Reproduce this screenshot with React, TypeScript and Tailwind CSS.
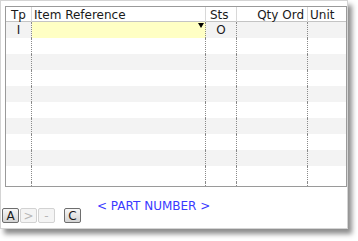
import React from 'react';

type Row = { tp?: string; sts?: string };

const ROWS: Row[] = [
  { tp: 'I', sts: 'O' },
  {}, {}, {}, {}, {}, {}, {}, {}, {},
];

const cell = 'h-[16px] border-r border-dotted border-[#8a8a8a]';

function ToolButton({ label, disabled }: { label: string; disabled?: boolean }) {
  return (
    <div
      className={
        'w-[17px] h-[15px] flex items-center justify-center text-[12px] leading-none rounded-[2px] border ' +
        (disabled
          ? 'border-[#d2d2d2] bg-[#f4f4f4] text-[#b8b8b8]'
          : 'border-[#6e6e6e] bg-gradient-to-b from-[#f7f7f7] to-[#d4d4d4] text-[#1a1a1a]')
      }
    >
      {label}
    </div>
  );
}

export default function App() {
  return (
    <div
      className="w-[358px] h-[241px] bg-white"
      style={{ fontFamily: '"DejaVu Sans", Verdana, sans-serif' }}
    >
      <div className="w-[348px] h-[229px] bg-white border border-[#d4d4d4] shadow-[4px_5px_5px_rgba(0,0,0,0.45)] flex flex-col pt-[5px] pl-[4px]">
        {/* grid */}
        <div className="w-[342px] h-[181px] border border-[#9a9a9a] flex flex-col overflow-hidden">
          <div className="grid grid-cols-[26px_174px_31px_71px_1fr] h-[15px] border-b border-[#c4c4c4] text-[12px] leading-[16px] text-[#1a1a1a]">
            <div className="pl-[5px] border-r border-[#d8d8d8]">Tp</div>
            <div className="pl-[2px] border-r border-[#d8d8d8]">Item Reference</div>
            <div className="pl-[4px] border-r border-[#d8d8d8]">Sts</div>
            <div className="pr-[3px] text-right border-r border-[#d8d8d8]">Qty Ord</div>
            <div className="pl-[2px]">Unit</div>
          </div>
          <div className="flex-1 flex flex-col">
            {ROWS.map((r, i) => (
              <div
                key={i}
                className={
                  'grid grid-cols-[26px_174px_31px_71px_1fr] text-[12px] leading-[17px] text-[#1a1a1a] ' +
                  (i % 2 === 0 ? 'bg-[#f3f3f3]' : 'bg-white')
                }
              >
                <div className={cell + ' text-center'}>{r.tp}</div>
                <div className={cell + ' relative ' + (i === 0 ? 'bg-[#ffffc4]' : '')}>
                  {i === 0 && (
                    <span className="absolute right-[1px] top-[1px] w-0 h-0 border-l-[3px] border-r-[3px] border-t-[5px] border-l-transparent border-r-transparent border-t-black" />
                  )}
                </div>
                <div className={cell + ' text-center'}>{r.sts}</div>
                <div className={cell}></div>
                <div className="h-[16px]"></div>
              </div>
            ))}
            <div className="flex-1 grid grid-cols-[26px_174px_31px_71px_1fr] bg-white">
              <div className="border-r border-dotted border-[#8a8a8a]" />
              <div className="border-r border-dotted border-[#8a8a8a]" />
              <div className="border-r border-dotted border-[#8a8a8a]" />
              <div className="border-r border-dotted border-[#8a8a8a]" />
              <div />
            </div>
          </div>
        </div>
        {/* footer */}
        <div className="flex items-start -ml-[3px] mt-[12px]">
          <div className="flex gap-[1px] mt-[9px]">
            <ToolButton label="A" />
            <ToolButton label=">" disabled />
            <ToolButton label="-" disabled />
          </div>
          <div className="ml-[9px] mt-[9px]">
            <ToolButton label="C" />
          </div>
          <div className="ml-[16px] text-[12px] leading-[14px] text-[#3a3aff]">&lt; PART NUMBER &gt;</div>
        </div>
      </div>
    </div>
  );
}
